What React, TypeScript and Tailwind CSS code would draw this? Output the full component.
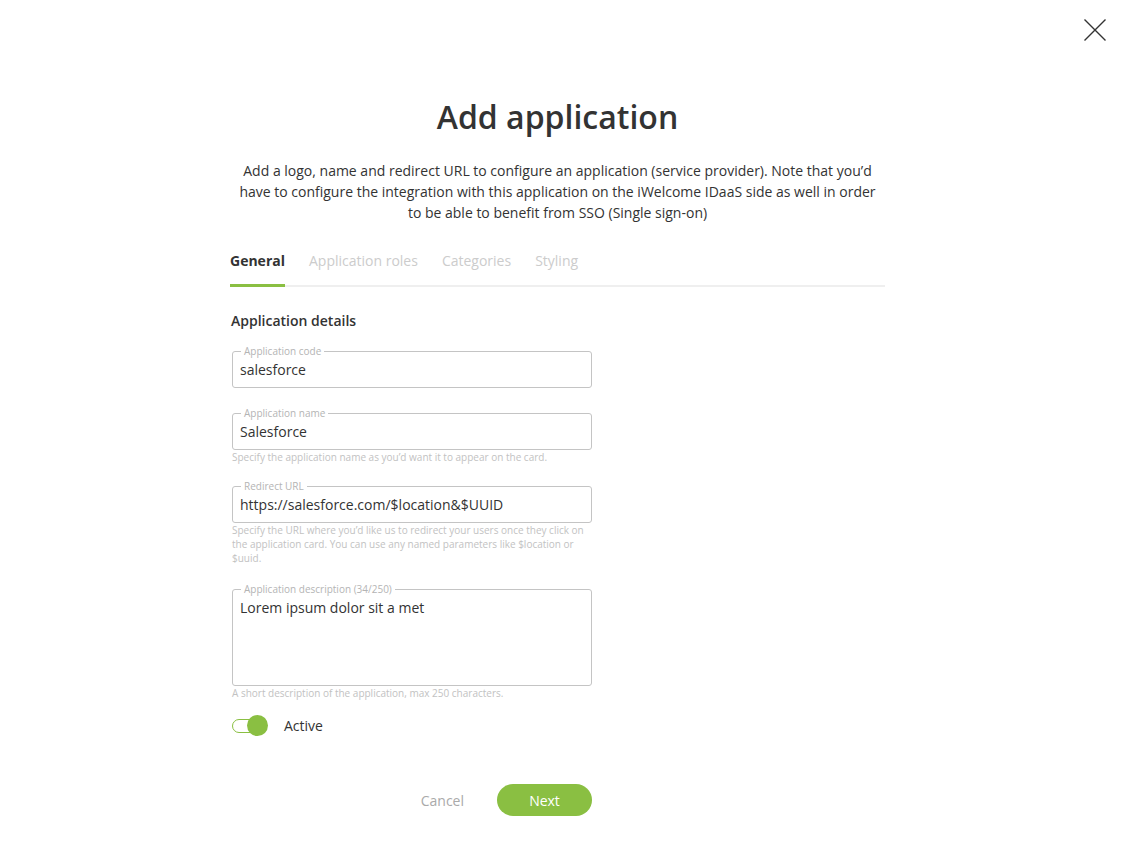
import React, { useState } from 'react';

interface FieldProps {
    label: string;
    value: string;
    multiline?: boolean;
}

const Field: React.FC<FieldProps> = ({ label, value, multiline }) => (
    <div className={`relative w-[360px] border border-[#c4c4c4] rounded-[3px] px-[7px] ${multiline ? 'h-[97px] pt-[5px]' : 'h-[37px] flex items-center'}`}>
        <span className="absolute left-[8px] top-[-8px] bg-white px-[3px] text-[10px] leading-[14px] text-[#b4b4b4]">{label}</span>
        <span className="text-[14px] leading-[20px] text-[#333]">{value}</span>
    </div>
);

const Helper: React.FC<{ children: React.ReactNode }> = ({ children }) => (
    <p className="w-[360px] text-[10px] leading-[14px] text-[#c2c2c2]">{children}</p>
);

const App: React.FC = () => {
    const [active, setActive] = useState(true);
    const tabs = ['General', 'Application roles', 'Categories', 'Styling'];

    return (
        <div className="relative min-h-[858px] bg-white font-['Open_Sans','Noto_Sans',sans-serif] text-[#333]">
            <button className="absolute right-[18px] top-[18px] w-[24px] h-[24px]">
                <svg width="24" height="24" viewBox="0 0 24 24" fill="none" stroke="#333" strokeWidth="1.4">
                    <path d="M1.5 1.5L22.5 22.5M22.5 1.5L1.5 22.5" />
                </svg>
            </button>

            <div className="flex justify-center pr-[10px]">
                <div className="w-[655px] flex flex-col pt-[95px]">
                    <h1 className="text-center text-[32px] leading-[44px] font-semibold text-[#333]">Add application</h1>
                    <p className="mt-[21px] px-[6px] text-center text-[14px] leading-[21px] text-[#333]">
                        Add a logo, name and redirect URL to configure an application (service provider). Note that you’d have to configure the integration with this application on the iWelcome IDaaS side as well in order to be able to benefit from SSO (Single sign-on)
                    </p>

                    <div className="mt-[28px] flex gap-[24px] border-b-2 border-[#efefef]">
                        {tabs.map((tab, i) => (
                            <div
                                key={tab}
                                className={`pb-[13px] text-[14px] leading-[20px] -mb-[2px] ${i === 0 ? 'font-bold text-[#333] border-b-[3px] border-[#8abf42]' : 'text-[#cccccc] border-b-[3px] border-transparent'}`}
                            >
                                {tab}
                            </div>
                        ))}
                    </div>

                    <h2 className="mt-[24px] ml-[1px] text-[14px] leading-[20px] font-semibold text-[#333]">Application details</h2>

                    <div className="ml-[2px] flex flex-col">
                        <div className="mt-[20px]">
                            <Field label="Application code" value="salesforce" />
                        </div>
                        <div className="mt-[25px]">
                            <Field label="Application name" value="Salesforce" />
                            <Helper>Specify the application name as you’d want it to appear on the card.</Helper>
                        </div>
                        <div className="mt-[22px]">
                            <Field label="Redirect URL" value="https://salesforce.com/$location&$UUID" />
                            <Helper>
                                Specify the URL where you’d like us to redirect your users once they click on the application card. You can use any named parameters like $location or $uuid.
                            </Helper>
                        </div>
                        <div className="mt-[24px]">
                            <Field label="Application description (34/250)" value="Lorem ipsum dolor sit a met" multiline />
                            <Helper>A short description of the application, max 250 characters.</Helper>
                        </div>

                        <div className="mt-[15px] flex items-center gap-[16px]">
                            <button onClick={() => setActive(!active)} className="relative w-[36px] h-[21px] flex items-center">
                                <span className={`w-[32px] h-[14px] rounded-full border ${active ? 'border-[#8abf42]' : 'border-[#c4c4c4]'} bg-white`} />
                                <span className={`absolute top-0 w-[21px] h-[21px] rounded-full ${active ? 'left-[15px] bg-[#8abf42]' : 'left-0 bg-[#c4c4c4]'}`} />
                            </button>
                            <span className="text-[14px] leading-[20px] text-[#333]">Active</span>
                        </div>

                        <div className="mt-[48px] w-[360px] flex justify-end items-center gap-[33px]">
                            <button className="text-[14px] text-[#aaaaaa]">Cancel</button>
                            <button className="w-[95px] h-[32px] rounded-full bg-[#8abf42] text-white text-[14px]">Next</button>
                        </div>
                    </div>
                </div>
            </div>
        </div>
    );
};

export default App;
